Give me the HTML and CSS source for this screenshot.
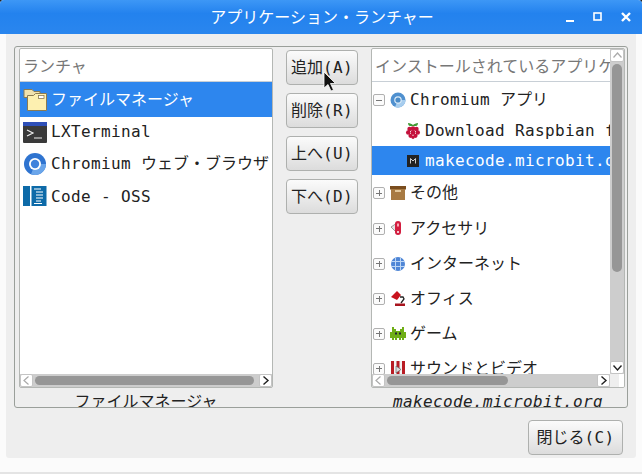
FILE: index.html
```html
<!DOCTYPE html>
<html lang="ja">
<head>
<meta charset="utf-8">
<title>アプリケーション・ランチャー</title>
<link rel="stylesheet" href="styles.css">
</head>
<body>
<div class="window">
  <header class="titlebar">
    <div class="title">アプリケーション・ランチャー</div>
    <div class="winbtns">
      <svg width="10" height="10" viewBox="0 0 10 10"><rect x="1" y="8" width="8" height="2.400" fill="#fff"/></svg>
      <svg width="10" height="10" viewBox="0 0 10 10"><rect x="1" y="1" width="7" height="7" fill="none" stroke="#fff" stroke-width="1.600"/></svg>
      <svg width="10" height="10" viewBox="0 0 10 10"><path d="M1 1 9 9M9 1 1 9" stroke="#fff" stroke-width="2.400"/></svg>
    </div>
  </header>
  <main class="client">
    <section class="frame">
      <div class="col col-left">
        <div class="listbox">
          <div class="head">ランチャ</div>
          <div class="view">
            <div class="row row-a sel">
              <svg class="ico" width="24" height="24" viewBox="0 0 24 24"><path d="M1 1.500h8l2 2h6v6H1z" fill="#f0e2ae" stroke="#8a7b52"/><path d="M4.500 7.500h6l2-2h11v17h-19z" fill="#fdf0b0" stroke="#8a7b52"/><rect x="15.500" y="7.500" width="5.500" height="3" fill="#fff" stroke="#8a7b52" stroke-width=".8"/></svg>
              <span>ファイルマネージャ</span>
            </div>
            <div class="row row-b">
              <svg class="ico" width="24" height="24" viewBox="0 0 24 24"><rect y="2" width="24" height="21" rx="1" fill="#3a3a3a"/><rect y="2" width="24" height="4" fill="#2e4fb8"/><path d="M4 10l6 3-6 3" fill="none" stroke="#eee" stroke-width="1.200"/><path d="M11 18h8" stroke="#eee" stroke-width="1.200"/></svg>
              <span class="lat">LXTerminal</span>
            </div>
            <div class="row row-c">
              <svg class="ico" width="24" height="24" viewBox="0 0 24 24"><circle cx="12" cy="12" r="11" fill="#2f74d0"/><path d="M12 12 23 12A11 11 0 0 1 8 22.300z" fill="#6aa5ea"/><circle cx="12" cy="12" r="6" fill="#fff"/><circle cx="12" cy="12" r="4.200" fill="#3f82dc"/></svg>
              <span><span class="lat">Chromium </span>ウェブ・ブラウザ</span>
            </div>
            <div class="row row-d">
              <svg class="ico" width="24" height="24" viewBox="0 0 24 24"><rect y="1" width="7" height="20" fill="#0d6aa8"/><rect x="8.500" y="1" width="15" height="20" fill="#0d6aa8"/><path d="M11 4h7M13 7h7M13 10h7M13 13h7M13 16h5M11 18.500h8" stroke="#fff" stroke-width="1.200"/></svg>
              <span class="lat">Code - OSS</span>
            </div>
          </div>
          <div class="hbar">
            <div class="arrow dim"><svg width="13" height="13" viewBox="0 0 13 13"><path d="M8.500 2.500 4 6.500l4.500 4" fill="none" stroke="#aaa" stroke-width="1.200"/></svg></div>
            <div class="trough"><div class="thumb thumb-left"></div></div>
            <div class="arrow"><svg width="13" height="13" viewBox="0 0 13 13"><path d="M4.500 2.500 9 6.500l-4.500 4" fill="none" stroke="#222" stroke-width="1.400"/></svg></div>
          </div>
        </div>
        <div class="caption">ファイルマネージャ</div>
      </div>

      <div class="btns">
        <button class="btn">追加<span class="lat">(A)</span></button>
        <button class="btn">削除<span class="lat">(R)</span></button>
        <button class="btn">上へ<span class="lat">(U)</span></button>
        <button class="btn">下へ<span class="lat">(D)</span></button>
      </div>

      <div class="col col-right">
        <div class="listbox">
          <div class="body">
            <div class="pane">
              <div class="head head-clip">インストールされているアプリケーション</div>
              <div class="view">
                <div class="tree t0">
                  <i class="exp minus"></i>
                  <svg class="tico" width="16" height="16" viewBox="0 0 16 16"><circle cx="8" cy="8" r="7.500" fill="#4f90cf"/><path d="M8 8 15.500 8A7.500 7.500 0 0 1 5 15z" fill="#a7cdee"/><circle cx="8" cy="8" r="3.800" fill="#dcebf8"/><circle cx="8" cy="8" r="2.600" fill="#4b8cc8"/></svg>
                  <span><span class="lat">Chromium </span>アプリ</span>
                </div>
                <div class="tree t1 child">
                  <svg class="tico" width="16" height="16" viewBox="0 0 16 16"><path d="M3 0c2 0 4 1 5 2 1-1 3-2 5-2 0 2-1 3-2 3H5C4 3 3 2 3 0z" fill="#3f9a33"/><circle cx="8" cy="5.500" r="2.300" fill="#c4123c"/><circle cx="4.500" cy="6" r="2.200" fill="#c4123c"/><circle cx="11.500" cy="6" r="2.200" fill="#c4123c"/><circle cx="3.200" cy="9.500" r="2.200" fill="#c4123c"/><circle cx="12.800" cy="9.500" r="2.200" fill="#c4123c"/><circle cx="8" cy="9.500" r="2.400" fill="#c4123c"/><circle cx="5.500" cy="12.800" r="2.100" fill="#c4123c"/><circle cx="10.500" cy="12.800" r="2.100" fill="#c4123c"/><circle cx="8" cy="14.300" r="1.600" fill="#c4123c"/></svg>
                  <span class="lat">Download Raspbian for Raspberry Pi</span>
                </div>
                <div class="tree t2 child sel">
                  <svg class="tico" width="16" height="16" viewBox="0 0 16 16"><rect x="2" y="2" width="12" height="12" fill="#222"/><path d="M5.500 10.500V5.500L8 8 10.500 5.500V10.500" fill="none" stroke="#ccc" stroke-width="1"/></svg>
                  <span class="lat">makecode.microbit.org</span>
                </div>
                <div class="tree t3">
                  <i class="exp plus"></i>
                  <svg class="tico" width="16" height="16" viewBox="0 0 16 16"><rect x="0" y="1" width="16" height="3.500" fill="#7a4d1e"/><rect x="1" y="4" width="14" height="11" fill="#a87a42"/><rect x="5" y="5" width="6" height="2" fill="#e3c89c"/></svg>
                  <span>その他</span>
                </div>
                <div class="tree t4">
                  <i class="exp plus"></i>
                  <svg class="tico" width="16" height="16" viewBox="0 0 16 16"><path d="M1 6 7 2v10z" fill="#e4e4e4" stroke="#777" stroke-width=".7"/><rect x="5" y="0" width="6" height="14" rx="3" fill="#d31d3f"/><rect x="7" y="2.500" width="2" height="3" fill="#f8a8b5"/><circle cx="8" cy="11" r="1" fill="#fff"/></svg>
                  <span>アクセサリ</span>
                </div>
                <div class="tree t5">
                  <i class="exp plus"></i>
                  <svg class="tico" width="16" height="16" viewBox="0 0 16 16"><circle cx="8" cy="8" r="7" fill="#4f86d6"/><path d="M1 5.500h14M1 10.500h14M5.500 1.500v13M10.500 1.500v13" stroke="#bcd6f5" stroke-width="1"/></svg>
                  <span>インターネット</span>
                </div>
                <div class="tree t6">
                  <i class="exp plus"></i>
                  <svg class="tico" width="16" height="16" viewBox="0 0 16 16"><path d="M1 6 7 0l4 4-4 5z" fill="#c8141e"/><path d="M10 6h3l1 2-3 4" fill="none" stroke="#222" stroke-width="1.300"/><rect x="5" y="12.500" width="10" height="2.500" fill="#a8141e"/></svg>
                  <span>オフィス</span>
                </div>
                <div class="tree t7">
                  <i class="exp plus"></i>
                  <svg class="tico" width="16" height="16" viewBox="0 0 16 16"><path d="M2 1h2v2h2v2h4V3h2V1h2v5h2v6h-2v2h-2v-2h-1v2H9v-2H7v2H5v-2H4v2H2v-2H0V6h2z" fill="#6fae16"/><rect x="5" y="6.500" width="2" height="2" fill="#223"/><rect x="9" y="6.500" width="2" height="2" fill="#223"/></svg>
                  <span>ゲーム</span>
                </div>
                <div class="tree t8">
                  <i class="exp plus"></i>
                  <svg class="tico" width="16" height="16" viewBox="0 0 16 16"><rect x="1" y="0" width="14" height="16" fill="#b81c24"/><rect x="4" y="0" width="2.500" height="16" fill="#f2f2f2"/><rect x="9.500" y="0" width="2.500" height="16" fill="#f2f2f2"/><path d="M6 5l5 3.500-5 3.500z" fill="#ddd" stroke="#555" stroke-width=".6"/></svg>
                  <span>サウンドとビデオ</span>
                </div>
              </div>
            </div>
            <div class="vbar">
              <div class="arrow dim"><svg width="13" height="13" viewBox="0 0 13 13"><path d="M2.500 8.500 6.500 4l4 4.500" fill="none" stroke="#aaa" stroke-width="1.200"/></svg></div>
              <div class="vtrough"><div class="vthumb"></div></div>
              <div class="arrow"><svg width="13" height="13" viewBox="0 0 13 13"><path d="M2.500 4.500 6.500 9l4-4.500" fill="none" stroke="#222" stroke-width="1.400"/></svg></div>
            </div>
          </div>
          <div class="hbar">
            <div class="arrow dim"><svg width="13" height="13" viewBox="0 0 13 13"><path d="M8.500 2.500 4 6.500l4.500 4" fill="none" stroke="#aaa" stroke-width="1.200"/></svg></div>
            <div class="trough"><div class="thumb thumb-right"></div></div>
            <div class="arrow"><svg width="13" height="13" viewBox="0 0 13 13"><path d="M4.500 2.500 9 6.500l-4.500 4" fill="none" stroke="#222" stroke-width="1.400"/></svg></div>
            <div class="corner"></div>
          </div>
        </div>
        <div class="caption italic lat">makecode.microbit.org</div>
      </div>
    </section>
    <footer class="actions"><button class="btn btn-close">閉じる<span class="lat">(C)</span></button></footer>
  </main>
  <svg class="cursor" width="14" height="22" viewBox="0 0 14 22"><path d="M1 1v16l4-3.500 3 6.500 2.500-1-3-6.500h5z" fill="#111" stroke="#fff" stroke-width=".8"/></svg>
</div>
</body>
</html>
```
FILE: styles.css
```css
* { box-sizing: border-box; }
html, body { margin: 0; padding: 0; background: #222; }
body { font: 16px/20px "DejaVu Sans Mono", "Noto Sans CJK JP", monospace; color: #222; }
.lat { letter-spacing: .37px; }
.window { position: relative; width: 642px; height: 474px; overflow: hidden; display: flex; flex-direction: column; background: #fbfbfb; border-radius: 4px 4px 0 0; border-bottom: 2px solid #e4e4e4; }
.titlebar { flex: none; height: 34px; background: linear-gradient(#3d97f6, #2382ee 40%, #2a86ee); color: #fff; position: relative; display: flex; align-items: center; justify-content: flex-end; padding-right: 11px; }
.title { position: absolute; left: 2px; right: 0; top: 8px; text-align: center; font-family: "DejaVu Sans", "Noto Sans CJK JP", sans-serif; }
.winbtns { display: flex; gap: 18px; margin-top: -1px; }
.client { flex: none; margin: 0 6px; height: 424px; background: #eeeeee; display: flex; flex-direction: column; padding: 12px 8px 0; border-radius: 0 0 3px 3px; }
.frame { flex: none; height: 362px; border: 1px solid #9a9f9a; border-radius: 3px; display: flex; padding: 1px 3px 0 4px; overflow: hidden; background: #eee; }
.col { display: flex; flex-direction: column; flex: none; }
.col-left { width: 254px; }
.col-right { width: 254px; }
.listbox { height: 340px; flex: none; border: 1px solid #b4b7b4; border-radius: 2px; background: #fff; display: flex; flex-direction: column; overflow: hidden; }
.head { flex: none; height: 33px; padding: 8px 3px 0; color: #777; border-bottom: 1px solid #c8cfd6; white-space: nowrap; overflow: hidden; }
.view { flex: 1; min-height: 0; overflow: hidden; }
.row { display: flex; align-items: center; gap: 4px; padding-left: 3px; white-space: nowrap; overflow: hidden; }
.row-a { height: 35px; }
.row-b { height: 30px; }
.row-c { height: 34px; }
.row-d { height: 31px; }
.sel { background: #2d86ee; color: #fff; }
.ico { flex: none; }
.hbar { flex: none; height: 13px; display: flex; background: #cdcdcd; }
.arrow { flex: none; width: 13px; height: 13px; background: #fff; border: 1px solid #c4c4c4; border-radius: 2px; display: flex; align-items: center; justify-content: center; }
.arrow svg { flex: none; }
.trough { flex: 1; padding: 2px 2px; }
.thumb { height: 9px; border-radius: 5px; background: #969696; }
.thumb-left { width: 219px; }
.thumb-right { width: 121px; }
.corner { flex: none; width: 14px; height: 13px; background: linear-gradient(90deg, #eee 65%, #fff 65%); }
.caption { flex: none; height: 20px; margin-top: 4px; text-align: center; white-space: nowrap; }
.italic { font-style: italic; }
.btns { flex: none; width: 72px; margin: 2px 13px 0; display: flex; flex-direction: column; gap: 8px; }
.btn { flex: none; height: 35px; padding: 0; border: 1px solid #aeb0ae; border-radius: 4px; background: linear-gradient(#fbfbfb, #dcdcdc); font: inherit; color: #222; white-space: nowrap; }
.body { flex: 1; min-height: 0; display: flex; }
.pane { flex: 1; min-width: 0; display: flex; flex-direction: column; }
.head-clip { height: 33px; }
.vbar { flex: none; width: 14px; display: flex; flex-direction: column; background: #cdcdcd; }
.vbar .arrow { width: 14px; }
.vtrough { flex: 1; padding: 2px 2px; }
.vthumb { height: 208px; width: 10px; border-radius: 5px; background: #969696; }
.tree { display: flex; align-items: center; white-space: nowrap; overflow: hidden; padding-left: 1px; }
.tree span { margin-left: 0; }
.tree > span { margin-left: 4px; }
.tree .lat { margin-left: 0; }
.tree > .lat { margin-left: 4px; }
.t0 { height: 34px; padding-top: 2px; }
.t1 { height: 30px; }
.t2 { height: 29px; }
.t3 { height: 36px; }
.t4, .t5, .t6, .t7, .t8 { height: 35px; }
.child { padding-left: 33px; }
.exp { flex: none; position: relative; display: block; width: 12px; height: 12px; border: 1px solid #b0b0b0; border-radius: 2px; background: #fbfbfb; margin-right: 5px; }
.exp::before { content: ""; position: absolute; left: 2px; right: 2px; top: 4.500px; height: 1px; background: #777; }
.plus::after { content: ""; position: absolute; top: 2px; bottom: 2px; left: 4.500px; width: 1px; background: #777; }
.tico { flex: none; }
.actions { flex: 1; display: flex; justify-content: flex-end; padding: 12px 5px 0 0; }
.btn-close { width: 95px; }
.cursor { position: absolute; left: 323px; top: 71px; }
```
